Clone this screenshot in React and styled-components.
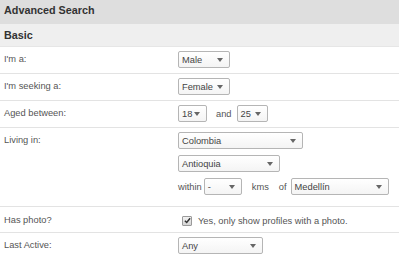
import React from 'react';
import styled, { createGlobalStyle } from 'styled-components';

const GlobalStyle = createGlobalStyle`
  body {
    margin: 0;
    background: #ffffff;
    font-family: Arial, "Liberation Sans", sans-serif;
  }
`;

const Select = ({ value, width }) => (
  <SelectBox $width={width}>
    <span>{value}</span>
    <Arrow />
  </SelectBox>
);

const App = () => {
  return (
    <Container>
      <GlobalStyle />
      <Header>Advanced Search</Header>
      <Section>Basic</Section>
      <Row>
        <Label>I'm a:</Label>
        <Controls>
          <Select value='Male' width={52} />
        </Controls>
      </Row>
      <Row>
        <Label>I'm seeking a:</Label>
        <Controls>
          <Select value='Female' width={52} />
        </Controls>
      </Row>
      <Row>
        <Label>Aged between:</Label>
        <Controls>
          <Line>
            <Select value='18' width={29} />
            <Word $left={9} $right={5}>and</Word>
            <Select value='25' width={31} />
          </Line>
        </Controls>
      </Row>
      <Row $bottom={11}>
        <Label>Living in:</Label>
        <Controls>
          <Select value='Colombia' width={125} />
          <Select value='Antioquia' width={102} />
          <Line>
            <Word $left={0} $right={2}>within</Word>
            <Select value='-' width={38} />
            <Word $left={10} $right={10}>kms</Word>
            <Word $left={0} $right={4}>of</Word>
            <Select value='Medellín' width={98} />
          </Line>
        </Controls>
      </Row>
      <Row $top={5} $bottom={3}>
        <Label>Has photo?</Label>
        <Controls>
          <Check>
            <Box>
              <svg width='7' height='7' viewBox='0 0 8 8'>
                <path d='M1 4.2 L3.1 6.3 L7 1.5' stroke='#333' strokeWidth='1.7' fill='none' />
              </svg>
            </Box>
            Yes, only show profiles with a photo.
          </Check>
        </Controls>
      </Row>
      <Row $last>
        <Label>Last Active:</Label>
        <Controls>
          <Select value='Any' width={85} />
        </Controls>
      </Row>
    </Container>
  );
};

const Container = styled.div`
  width: 399px;
  height: 255px;
  overflow: hidden;
  color: #555555;
  font-size: 9.3px;
`;

const Header = styled.div`
  display: flex;
  align-items: center;
  height: 24px;
  box-sizing: border-box;
  padding: 0 4px 4px;
  background: #dedede;
  color: #333333;
  font-weight: 700;
  font-size: 10.8px;
`;

const Section = styled.div`
  display: flex;
  align-items: center;
  height: 23px;
  box-sizing: border-box;
  padding: 0 4px;
  background: #efefef;
  border-bottom: 1px solid #e6e6e6;
  color: #333333;
  font-weight: 700;
  font-size: 10.8px;
`;

const Row = styled.div`
  display: grid;
  grid-template-columns: 178px 1fr;
  padding: ${({ $top }) => $top ?? 4}px 0 ${({ $bottom }) => $bottom ?? 5}px;
  border-bottom: ${({ $last }) => ($last ? 'none' : '1px solid #e3e3e3')};
`;

const Label = styled.div`
  padding-left: 4px;
  line-height: 16px;
  color: #555555;
`;

const Controls = styled.div`
  display: flex;
  flex-direction: column;
  align-items: flex-start;
  gap: 6px;
`;

const Line = styled.div`
  display: flex;
  align-items: center;
`;

const Word = styled.span`
  margin: 0 ${({ $right }) => $right}px 0 ${({ $left }) => $left}px;
  color: #555555;
`;

const SelectBox = styled.div`
  display: flex;
  align-items: center;
  justify-content: space-between;
  box-sizing: border-box;
  width: ${({ $width }) => $width}px;
  height: 17px;
  padding: 0 6px 0 3px;
  border: 1px solid #b5b5b5;
  border-radius: 2px;
  background: linear-gradient(#ffffff, #f4f4f4);
  color: #444444;
  font-size: 9.3px;
`;

const Arrow = styled.span`
  width: 0;
  height: 0;
  border-left: 3.5px solid transparent;
  border-right: 3.5px solid transparent;
  border-top: 4px solid #666666;
`;

const Check = styled.div`
  display: flex;
  align-items: center;
  height: 17px;
  padding-left: 4px;
  color: #555555;
`;

const Box = styled.span`
  display: flex;
  align-items: center;
  justify-content: center;
  width: 8px;
  height: 8px;
  margin-right: 6px;
  border: 1px solid #9a9a9a;
  border-radius: 1px;
  background: linear-gradient(#f2f2f2, #d6d6d6);
`;

export default App;
